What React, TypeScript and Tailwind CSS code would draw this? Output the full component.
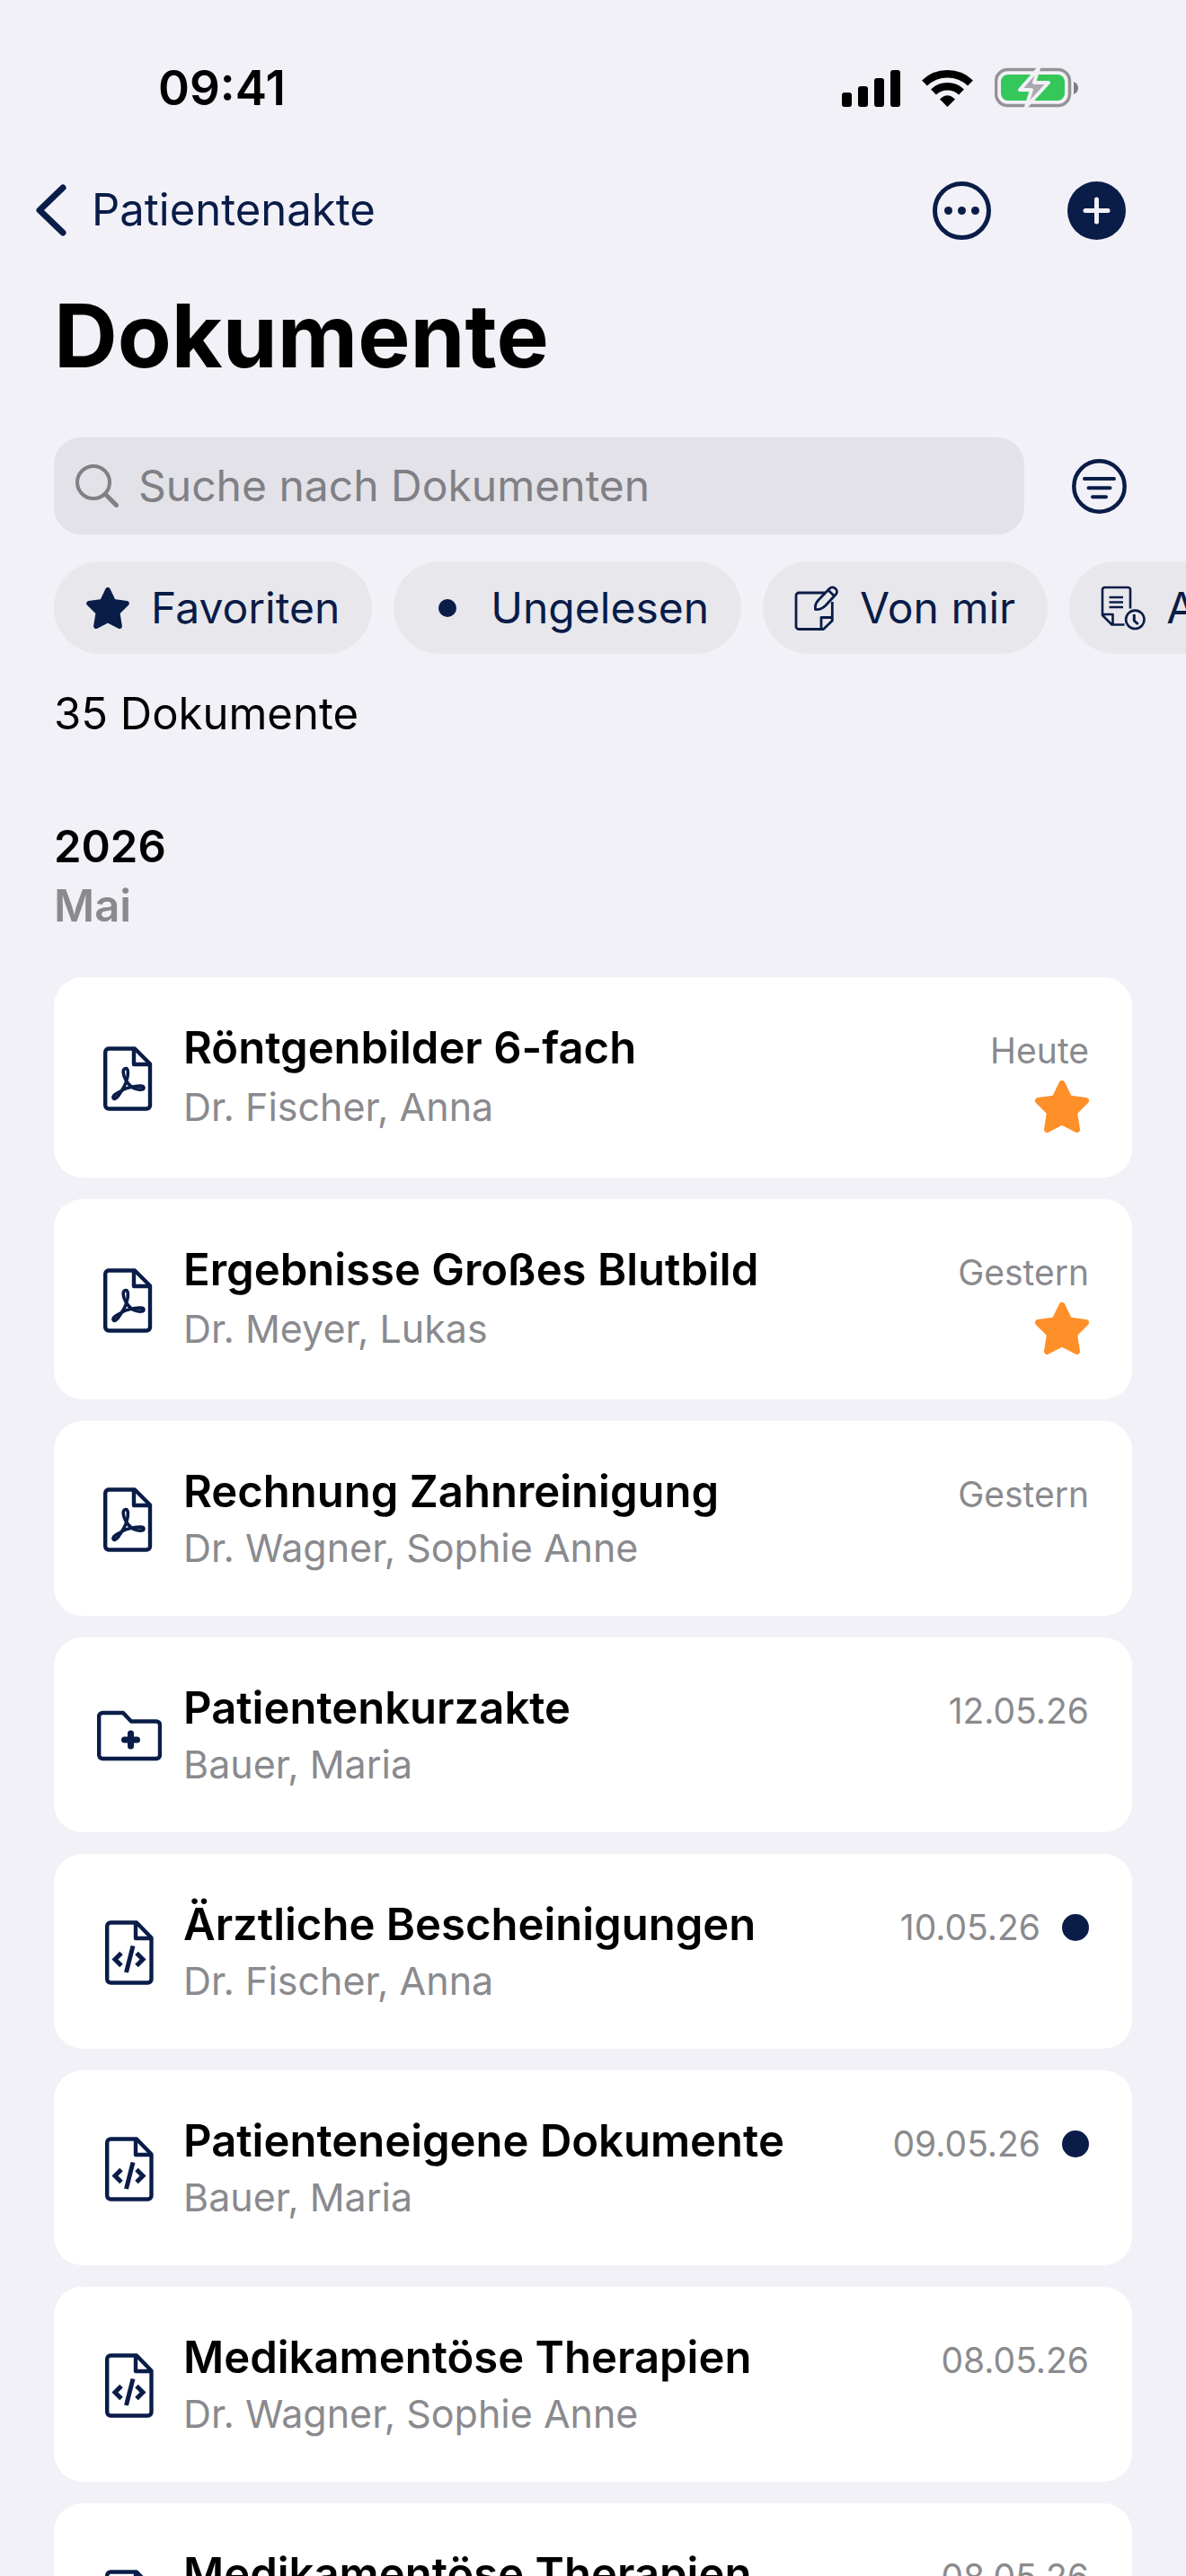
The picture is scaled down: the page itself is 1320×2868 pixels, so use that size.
import { useState } from 'react';

type DocType = 'pdf' | 'folder' | 'code';

interface DocumentItem {
    title: string;
    author: string;
    date: string;
    type: DocType;
    favorite?: boolean;
    unread?: boolean;
}

const documents: DocumentItem[] = [
    { title: 'Röntgenbilder 6-fach', author: 'Dr. Fischer, Anna', date: 'Heute', type: 'pdf', favorite: true },
    { title: 'Ergebnisse Großes Blutbild', author: 'Dr. Meyer, Lukas', date: 'Gestern', type: 'pdf', favorite: true },
    { title: 'Rechnung Zahnreinigung', author: 'Dr. Wagner, Sophie Anne', date: 'Gestern', type: 'pdf' },
    { title: 'Patientenkurzakte', author: 'Bauer, Maria', date: '12.05.26', type: 'folder' },
    { title: 'Ärztliche Bescheinigungen', author: 'Dr. Fischer, Anna', date: '10.05.26', type: 'code', unread: true },
    { title: 'Patienteneigene Dokumente', author: 'Bauer, Maria', date: '09.05.26', type: 'code', unread: true },
    { title: 'Medikamentöse Therapien', author: 'Dr. Wagner, Sophie Anne', date: '08.05.26', type: 'code' },
    { title: 'Medikamentöse Therapien', author: 'Dr. Wagner, Sophie Anne', date: '08.05.26', type: 'code' },
];

function StarIcon({ className }: { className: string }) {
    return (
        <svg className={className} viewBox="0 0 60 58" fill="currentColor" stroke="currentColor" strokeWidth="7" strokeLinejoin="round">
            <path d="M30 3.500L38 20L56.500 22.500L43.500 35.500L46.500 54.500L30 46L13.500 54.500L16.500 35.500L3.500 22.500L22 20Z" />
        </svg>
    );
}

function DocIcon({ type }: { type: DocType }) {
    if (type === 'folder') {
        return (
            <svg className="size-18 shrink-0" viewBox="0 0 72 72" fill="none" stroke="currentColor" strokeWidth="4.400" strokeLinejoin="round">
                <path d="M2.200 14a4 4 0 0 1 4-4H29l9 9.500h28a4 4 0 0 1 4 4V57a4 4 0 0 1-4 4H6.200a4 4 0 0 1-4-4Z" />
                <path d="M37.500 33v14M30.500 40h14" strokeWidth="7" strokeLinecap="round" />
            </svg>
        );
    }
    if (type === 'pdf') {
        return (
            <svg className="size-18 shrink-0" viewBox="0 0 72 72" fill="none" stroke="currentColor" strokeWidth="4.400" strokeLinejoin="round">
                <path d="M12.200 2.500H42l17 17v46a4 4 0 0 1-4 4H13.200a4 4 0 0 1-4-4V6.500a4 4 0 0 1 4-4Z" />
                <path d="M41 3v17h18" />
                <path d="M32 24.500c-4 0-3.500 7 0 13c3 5 7 9 12 10c4 1 8 1 8-1.500s-6-2-10-1.500c-6 1-11 2-15 5c-4 2-10 5-9 8s6-2 8-6c3-5 6-9 7-14c2-6 2-13-1-13Z" strokeWidth="3.600" />
            </svg>
        );
    }
    return (
        <svg className="size-18 shrink-0" viewBox="0 0 72 72" fill="none" stroke="currentColor" strokeWidth="4.400" strokeLinejoin="round">
            <path d="M15.200 2.500H44l16.500 17v46a4 4 0 0 1-4 4H15.200a4 4 0 0 1-4-4V6.500a4 4 0 0 1 4-4Z" />
            <path d="M43 3v17h18" />
            <path d="M27 36.500l-7 7 7 7M44 36.500l7 7-7 7M40 28.500l-7.500 29.500" strokeWidth="5" strokeLinejoin="miter" />
        </svg>
    );
}

function StatusBar() {
    return (
        <div className="flex h-42 items-center justify-between pt-7 pr-30 pl-44">
            <span className="text-[53px] leading-none font-semibold">09:41</span>
            <div className="flex items-center gap-6">
                <svg className="h-11 w-[65px]" viewBox="0 0 65 44">
                    <rect x="0" y="27" width="11" height="16" rx="3" />
                    <rect x="18" y="20" width="11" height="23" rx="3" />
                    <rect x="36" y="11" width="11" height="32" rx="3" />
                    <rect x="54" y="2" width="11" height="41" rx="3" />
                </svg>
                <svg className="h-11 w-[57px]" viewBox="0 0 57 44" fill="none" stroke="#000" strokeWidth="8.500">
                    <path d="M3 16.500a37 37 0 0 1 51 0" />
                    <path d="M13 26.500a22.500 22.500 0 0 1 31 0" />
                    <path d="M28.500 43L20 34.500q8.500-8.500 17 0Z" fill="#000" stroke="none" />
                </svg>
                <svg className="h-[46px] w-[93px]" viewBox="0 0 93 46" fill="none">
                    <rect x="1.500" y="2.500" width="82" height="40" rx="13" stroke="#939397" strokeWidth="3.500" />
                    <rect x="7" y="8" width="71" height="29" rx="8" fill="#34c759" />
                    <path d="M88 16q5 2 5 7t-5 7Z" fill="#7d7d82" />
                    <path d="M49 1L28 25h13l-6 19L60 17H44Z" fill="#a9a9ae" stroke="#f2f1f7" strokeWidth="4" strokeLinejoin="round" />
                </svg>
            </div>
        </div>
    );
}

const chipIcons = {
    star: <StarIcon className="h-[46px] w-12" />,
    dot: <span className="flex size-12 items-center justify-center"><span className="size-5 rounded-full bg-[#0a1c48]" /></span>,
    note: (
        <svg className="size-12 overflow-visible" viewBox="0 0 48 48" fill="none" stroke="currentColor" strokeWidth="2.800" strokeLinejoin="round">
            <path d="M33 7H4a3 3 0 0 0-3 3v34.500a3 3 0 0 0 3 3h27.500l9.800-9.500V17M29 47V34.500h12.300" />
            <path d="M22.500 25.500c-.5-4 0-6.500 3-10L38 2.500c4.500-4.500 11 2 7.500 6L34 21c-3.500 3.500-7 5-11.500 4.500ZM37 4.200l6.500 6.300" />
        </svg>
    ),
    history: (
        <svg className="size-12 overflow-visible" viewBox="0 0 48 48" fill="none" stroke="currentColor" strokeWidth="2.600" strokeLinejoin="round">
            <path d="M32 24.500V3.500a2.500 2.500 0 0 0-2.500-2.500h-26A2.500 2.500 0 0 0 1 3.500V32l10.500 10.500h14M1 31h11.500v11.500" />
            <path d="M8.500 12h15.500M8.500 17.500h15.500M8.500 23h15.500" />
            <circle cx="37.300" cy="36.800" r="10.200" />
            <path d="M36.300 31v7l4.400 4" strokeWidth="3" />
        </svg>
    ),
};

const filters = [
    { id: 'favorites', label: 'Favoriten', icon: 'star' },
    { id: 'unread', label: 'Ungelesen', icon: 'dot' },
    { id: 'mine', label: 'Von mir', icon: 'note' },
    { id: 'pending', label: 'Ausstehend', icon: 'history' },
] as const;

function DocumentCard({ doc }: { doc: DocumentItem }) {
    return (
        <li className="flex items-center gap-6 rounded-[32px] bg-white px-12 pt-12 pb-[46px]">
            <span className="text-[#0a1c48]">
                <DocIcon type={doc.type} />
            </span>
            <div className="min-w-0 flex-1">
                <div className="flex items-baseline justify-between gap-6">
                    <h3 className="truncate text-[49px] leading-[61px] font-semibold">{doc.title}</h3>
                    <div className="flex shrink-0 items-center gap-6 text-[39px] leading-[54px] text-[#8a8a8e]">
                        {doc.date}
                        {doc.unread && <span className="size-[30px] rounded-full bg-[#0a1c48]" />}
                    </div>
                </div>
                <div className="mt-[2px] flex items-center justify-between">
                    <p className="truncate text-[43px] leading-[60px] text-[#8a8a8e]">{doc.author}</p>
                    {doc.favorite && <StarIcon className="my-1 h-[58px] w-[60px] text-[#ff8f28]" />}
                </div>
            </div>
        </li>
    );
}

export default function App() {
    const [query, setQuery] = useState('');

    return (
        <div className="h-screen overflow-hidden bg-[#f2f1f7] font-['Inter','Liberation_Sans',sans-serif] text-black">
            <StatusBar />

            {/* Navigation */}
            <nav className="flex h-33 items-center justify-between pr-[67px] pl-10 text-[#0a1c48]">
                <a href="#patientenakte" className="flex items-center gap-7 text-[49px]">
                    <svg className="h-[58px] w-[34px]" viewBox="0 0 34 58" fill="none" stroke="currentColor" strokeWidth="7" strokeLinecap="round" strokeLinejoin="round">
                        <path d="M30 4L4 29l26 25" />
                    </svg>
                    Patientenakte
                </a>
                <div className="flex gap-[85px]">
                    <button type="button" aria-label="Mehr">
                        <svg className="size-[65px]" viewBox="0 0 65 65" fill="currentColor">
                            <circle cx="32.500" cy="32.500" r="30" fill="none" stroke="currentColor" strokeWidth="5" />
                            <circle cx="17.500" cy="32.500" r="4.500" />
                            <circle cx="32.500" cy="32.500" r="4.500" />
                            <circle cx="47.500" cy="32.500" r="4.500" />
                        </svg>
                    </button>
                    <button type="button" aria-label="Hinzufügen">
                        <svg className="size-[65px]" viewBox="0 0 65 65">
                            <circle cx="32.500" cy="32.500" r="32.500" fill="currentColor" />
                            <path d="M32.500 20v25M20 32.500h25" stroke="#f2f1f7" strokeWidth="5" strokeLinecap="round" />
                        </svg>
                    </button>
                </div>
            </nav>

            <header className="px-15">
                <h1 className="text-[98px] leading-[148px] font-bold">Dokumente</h1>
                <div className="mt-[39px] flex items-center justify-between">
                    <label className="mr-[53px] flex h-27 flex-1 items-center gap-[22px] rounded-[30px] bg-[#e3e2e8] px-6 text-[#808085]">
                        <svg className="size-12" viewBox="0 0 48 48" fill="none" stroke="currentColor" strokeWidth="4" strokeLinecap="round">
                            <circle cx="20" cy="20" r="18" />
                            <path d="M33 33l12.500 12.500" strokeWidth="5" />
                        </svg>
                        <input
                            type="text"
                            aria-label="Suche nach Dokumenten"
                            placeholder="Suche nach Dokumenten"
                            value={query}
                            onChange={(e) => setQuery(e.target.value)}
                            className="min-w-0 flex-1 bg-transparent text-[48px] outline-none placeholder:text-[#808085]"
                        />
                    </label>
                    <button type="button" aria-label="Filter" className="mr-[6px] text-[#0a1c48]">
                        <svg className="size-[61px]" viewBox="0 0 61 61" fill="none" stroke="currentColor" strokeWidth="4.500" strokeLinecap="round">
                            <circle cx="30.500" cy="30.500" r="28.200" />
                            <path d="M14 22h33M18.500 32.300h24M23 42.300h15" strokeWidth="4" />
                        </svg>
                    </button>
                </div>
            </header>

            {/* Schnellfilter */}
            <div className="mt-[30px] flex gap-6 overflow-hidden pl-15 text-[#0a1c48]">
                {filters.map((filter) => (
                    <button key={filter.id} type="button" className="flex h-[103px] shrink-0 items-center gap-6 rounded-full bg-[#e8e8ec] px-9 text-[48px]">
                        {chipIcons[filter.icon]}
                        {filter.label}
                    </button>
                ))}
            </div>

            <main className="px-15">
                <p className="mt-9 text-[49px] leading-[61px]">35 Dokumente</p>
                <h2 className="mt-[85px] text-[49px] leading-[66px] font-semibold">2026</h2>
                <p className="text-[49px] leading-[66px] font-semibold text-[#8a8a8e]">Mai</p>
                <ul className="mt-[46px] flex flex-col gap-6">
                    {documents.map((doc, index) => (
                        <DocumentCard key={index} doc={doc} />
                    ))}
                </ul>
            </main>
        </div>
    );
}
